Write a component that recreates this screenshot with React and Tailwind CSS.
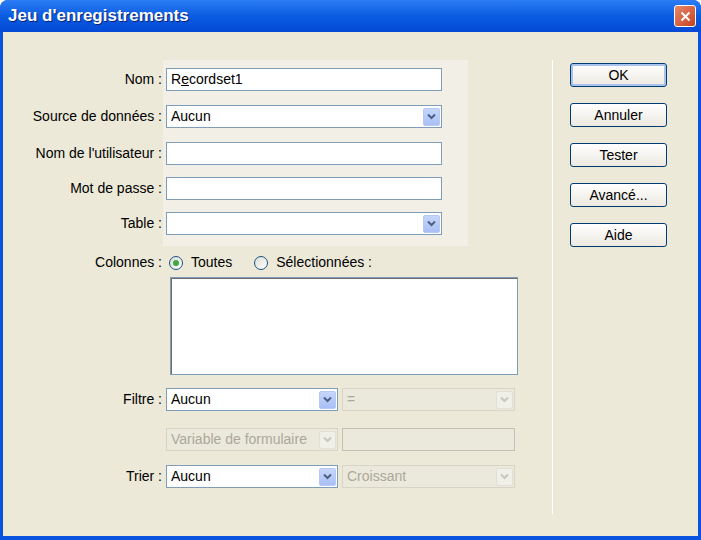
const F = { fontFamily: '"Liberation Sans",Arial,sans-serif' };

function Arrow({ disabled }) {
  return (
    <div className={`w-[17px] h-[18px] my-[1px] mr-[1px] rounded-[2px] flex items-center justify-center ${disabled ? 'bg-[#f0efe8] border border-[#e2e0d5]' : 'bg-gradient-to-b from-[#c6d6fb] to-[#a9c0f6] border border-[#b6c8f3]'}`}>
      <svg width="9" height="7" viewBox="0 0 9 7"><path d="M1 1.5 L4.5 5 L8 1.5" fill="none" stroke={disabled ? '#c9c7ba' : '#4d6185'} strokeWidth="2" /></svg>
    </div>
  );
}

function Select({ w, value, disabled }) {
  return (
    <div className={`h-[23px] border ${disabled ? 'border-[#d8d5c6] bg-[#ebe9dc] text-[#aca899]' : 'border-[#7f9db9] bg-white text-black'} flex items-center justify-between`} style={{ width: w }}>
      <span className="pl-[4px] text-[14px] whitespace-nowrap overflow-hidden">{value}</span>
      <Arrow disabled={disabled} />
    </div>
  );
}

function Input({ w, value, disabled }) {
  return (
    <div className={`h-[23px] border ${disabled ? 'border-[#c3c1b5] bg-[#ebe9dc]' : 'border-[#7f9db9] bg-white'} flex items-center pl-[4px] text-[14px]`} style={{ width: w }}>{value}</div>
  );
}

function Row({ label, children, mt }) {
  return (
    <div className="flex items-center" style={{ marginTop: mt }}>
      <div className="w-[163px] text-right pr-[4px] text-[14px] whitespace-nowrap">{label}</div>
      {children}
    </div>
  );
}

function Btn({ children, def }) {
  return (
    <div className={`w-[97px] h-[24px] rounded-[3px] border border-[#003c74] bg-gradient-to-b from-white to-[#ece9e0] flex items-center justify-center text-[14px] ${def ? 'shadow-[inset_0_0_0_2px_#a9c2ee]' : ''}`}>{children}</div>
  );
}

function Radio({ checked, label }) {
  return (
    <div className="flex items-center gap-[8px]">
      <div className="w-[14px] h-[14px] rounded-full border border-[#1c5180] bg-gradient-to-br from-[#dcdcd6] to-white flex items-center justify-center">
        {checked && <div className="w-[6px] h-[6px] rounded-full bg-[#3fa73f]" />}
      </div>
      <span className="text-[14px]">{label}</span>
    </div>
  );
}

export default function App() {
  return (
    <div style={F} className="w-[701px] h-[540px] bg-[#0a52e0] flex flex-col rounded-t-[8px] overflow-hidden">
      <div className="h-[32px] bg-gradient-to-b from-[#2b7cf5] via-[#0a5ce0] to-[#0549d6] flex items-center justify-between pl-[8px] pr-[5px]">
        <span className="text-white font-bold text-[17px] [text-shadow:1px_1px_#0a1f6e]">Jeu d'enregistrements</span>
        <div className="w-[22px] h-[22px] rounded-[3px] border border-white bg-gradient-to-br from-[#e9876a] to-[#c4411c] flex items-center justify-center">
          <svg width="11" height="11" viewBox="0 0 11 11"><path d="M1.5 1.5 L9.5 9.5 M9.5 1.5 L1.5 9.5" stroke="white" strokeWidth="2" /></svg>
        </div>
      </div>
      <div className="flex-1 mx-[3px] mb-[4px] bg-[#ece9d8] flex text-black">
        <div className="w-[549px] pt-[28px] relative">
          <div className="absolute left-[160px] top-[28px] w-[305px] h-[186px] bg-[#f1efe6]" />
          <div className="relative">
            <Row label="Nom :" mt={8}><Input w={276} value={<span>R<u>e</u>cordset1</span>} /></Row>
            <Row label="Source de données :" mt={14}><Select w={276} value="Aucun" /></Row>
            <Row label="Nom de l'utilisateur :" mt={14}><Input w={276} /></Row>
            <Row label="Mot de passe :" mt={12}><Input w={276} /></Row>
            <Row label="Table :" mt={12}><Select w={276} value="" /></Row>
            <Row label="Colonnes :" mt={17}><div className="flex items-center gap-[22px] pl-[3px]"><Radio checked label="Toutes" /><Radio label="Sélectionnées :" /></div></Row>
            <div className="ml-[167px] mt-[4px] w-[348px] h-[98px] border border-[#7f9db9] bg-white shadow-[inset_1px_1px_0_#6d6d6d]" />
            <Row label="Filtre :" mt={13}><div className="flex gap-[4px]"><Select w={172} value="Aucun" /><Select w={173} value="=" disabled /></div></Row>
            <Row label="" mt={17}><div className="flex gap-[4px]"><Select w={172} value="Variable de formulaire" disabled /><Input w={173} disabled /></div></Row>
            <Row label="Trier :" mt={14}><div className="flex gap-[4px]"><Select w={172} value="Aucun" /><Select w={173} value="Croissant" disabled /></div></Row>
          </div>
        </div>
        <div className="w-[1px] bg-[#aca899] mt-[28px] mb-[22px] border-r border-white" />
        <div className="flex flex-col gap-[16px] pl-[17px] pt-[31px]">
          <Btn def>OK</Btn>
          <Btn>Annuler</Btn>
          <Btn>Tester</Btn>
          <Btn>Avancé...</Btn>
          <Btn>Aide</Btn>
        </div>
      </div>
    </div>
  );
}
